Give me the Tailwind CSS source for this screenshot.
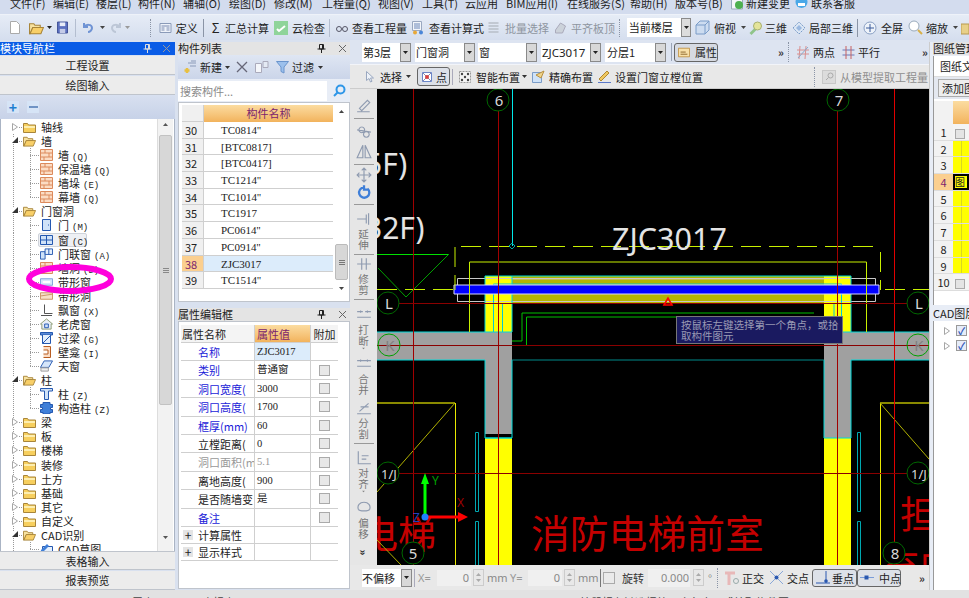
<!DOCTYPE html>
<html lang="en">

<head>
    <meta charset="UTF-8">
    <title>GCL</title>
    <script src="https://cdn.jsdelivr.net/npm/@tailwindcss/browser@4"></script>
</head>

<body class="m-0">
    <!-- shared icons -->
    <svg width="0" height="0" class="absolute">
        <symbol id="folder" viewBox="0 0 13 12"><path d="M.5 2.500h4l1 1.500h7v7.500h-12z" fill="#f7cf5e" stroke="#a8853a"/><path d="M1 5h11v2H1z" fill="#fdeeb0"/></symbol>
        <symbol id="folderopen" viewBox="0 0 14 12"><path d="M.5 2h4l1 1.500h5v2h-7l-2.500 6h-.500z" fill="#f7e2a0" stroke="#a8853a"/><path d="M3.500 5.500h10l-2.500 6H1z" fill="#f8cf68" stroke="#a8853a"/></symbol>
        <symbol id="brick" viewBox="0 0 13 12"><path d="M.5.500h12v11H.5z" fill="#fbdcc4" stroke="#dc8a5c"/><path d="M.5 4h12M.5 8h12M5 .500V4M9 4v4M4 8v3.500" stroke="#dc8a5c" fill="none"/></symbol>
        <symbol id="door" viewBox="0 0 13 12"><path d="M2.500.500h8v11h-8z" fill="#cfe2f8" stroke="#2458b0"/><path d="M8 6h1" stroke="#2458b0"/></symbol>
        <symbol id="window" viewBox="0 0 13 12"><path d="M.5 1.500h12v9H.5z" fill="#cfe2f8" stroke="#2458b0"/><path d="M6.500 1.500v9M.5 6h12" stroke="#2458b0"/></symbol>
        <symbol id="combo" viewBox="0 0 14 12"><path d="M.5 3.500h5v8h-5z" fill="#cfe2f8" stroke="#2458b0"/><path d="M5.500.500h8v6h-8z" fill="#e4effc" stroke="#2458b0"/><path d="M9.500.500v6" stroke="#2458b0"/></symbol>
        <symbol id="band" viewBox="0 0 14 12"><path d="M.5 2.500h13v7H.5z" fill="#d6e6fa" stroke="#7aa0d8"/><path d="M3 5h8v2H3z" fill="#fff"/></symbol>
        <symbol id="bandhole" viewBox="0 0 14 12"><path d="M.5 2.500h13v7H.5z" fill="#f7e0c8" stroke="#c89060"/><path d="M.5 6l13-2" stroke="#c89060"/></symbol>
        <symbol id="bay" viewBox="0 0 13 12"><path d="M4.500.500v9h8M1 11.500h11" stroke="#555" fill="none"/></symbol>
        <symbol id="dormer" viewBox="0 0 14 12"><path d="M7 .500l6.500 5.500H12v5.500H2V6H.5z" fill="#e8eef6" stroke="#8a9a72"/><path d="M5 6h4v4H5z" fill="#cfe2f8" stroke="#2458b0"/></symbol>
        <symbol id="lintel" viewBox="0 0 13 12"><path d="M.5.500h12v2.500H.5z" fill="#5a8ad6" stroke="#2458b0"/><path d="M2.500 3v8.500h8V3" fill="#e4effc" stroke="#2458b0"/><path d="M2.500 11.500l8-8" stroke="#2458b0"/></symbol>
        <symbol id="niche" viewBox="0 0 13 12"><path d="M3.500.500h7v11h-7" fill="#fbdcc4" stroke="#b85c20"/><path d="M3.500 4H8v4H3.500" fill="#fff" stroke="#b85c20"/></symbol>
        <symbol id="skylight" viewBox="0 0 14 12"><path d="M4.500.500h9l-4 7h-9z" fill="#d6e6fa" stroke="#2458b0"/><path d="M1 8h8v3.500H1z" fill="#eee" stroke="#999"/></symbol>
        <symbol id="column" viewBox="0 0 13 12"><path d="M.5.500h12v2.500h-4v8.500h-4V3h-4z" fill="#cfe2f8" stroke="#2458b0"/></symbol>
        <symbol id="gz" viewBox="0 0 13 12"><path d="M3 .500h7v2h2.500v3h-2v2h2v3H10v1.500H3v-1.500H.5v-3h2v-2h-2v-3H3z" fill="#3f7fd8" stroke="#2458b0"/></symbol>
        <symbol id="sketch" viewBox="0 0 13 12"><path d="M2.500 3.500h10v8h-10z" fill="#e4effc" stroke="#2458b0"/><path d="M1 7l6-6 2 2-6 6-2.500.500z" fill="#3f7fd8"/></symbol>
        <symbol id="arrow" viewBox="0 0 5 3"><path d="M0 0h5L2.500 3z" fill="currentColor"/></symbol>
        <symbol id="closed" viewBox="0 0 6 8"><path d="M.5.500l5 3.500-5 3.500z" fill="#fff" stroke="#a6a6a6"/></symbol>
        <symbol id="open" viewBox="0 0 6 6"><path d="M6 0v6H0z" fill="#333"/></symbol>
        <symbol id="pin" viewBox="0 0 9 9"><path d="M2.500.500h4v4.500h-4zM.5 5h8M4.500 5v4M5.500 1v4" fill="none" stroke="#222"/></symbol>
        <symbol id="x" viewBox="0 0 9 9"><path d="M1 1l7 7M8 1L1 8" stroke="#666" fill="none"/></symbol>
    </svg>

    <div class="w-[969px] h-[598px] overflow-hidden flex flex-col relative bg-[#d9e1ef] text-[#222] text-[11px] leading-[14px] font-['Noto_Sans_CJK_SC',sans-serif]">

        <!-- menu bar, cut off at the top -->
        <div class="h-[14px] shrink-0 flex items-start overflow-hidden bg-[#d3dcee] pl-[10px] whitespace-nowrap">
            <div class="-mt-[5px] flex leading-[16px]">
                <span class="w-[43px]">文件(F)</span>
                <span class="w-[43px]">编辑(E)</span>
                <span class="w-[42px]">楼层(L)</span>
                <span class="w-[45px]">构件(N)</span>
                <span class="w-[46px]">辅轴(O)</span>
                <span class="w-[45px]">绘图(D)</span>
                <span class="w-[48px]">修改(M)</span>
                <span class="w-[56px]">工程量(Q)</span>
                <span class="w-[44px]">视图(V)</span>
                <span class="w-[43px]">工具(T)</span>
                <span class="w-[41px]">云应用</span>
                <span class="w-[61px]">BIM应用(I)</span>
                <span class="w-[63px]">在线服务(S)</span>
                <span class="w-[45px]">帮助(H)</span>
                <span class="w-[55px]">版本号(B)</span>
                <svg class="w-[16px] h-[14px] mt-[1px]" viewBox="0 0 16 14"><path d="M1.500 0h11v13h-11z" fill="#f4f6fb" stroke="#9ab"/><circle cx="9" cy="9" r="4" fill="#4cb050"/></svg>
                <span class="w-[44px]">新建变更</span>
                <svg class="ml-[5px] w-[13px] h-[14px] mt-[1px]" viewBox="0 0 13 14"><circle cx="6.500" cy="6" r="6" fill="#4aa8e8"/><path d="M3 7h7v3H3z" fill="#fff"/></svg>
                <span class="ml-[3px]">联系客服</span>
            </div>
        </div>

        <!-- main toolbar -->
        <div class="h-[26px] shrink-0 flex items-center whitespace-nowrap bg-gradient-to-b from-[#e6ecf6] to-[#d5deee] border-t border-[#eef2f9]">
            <svg class="ml-[10px] shrink-0" width="10" height="13" viewBox="0 0 10 13"><path d="M.5.500h6l3 3v9h-9z" fill="#fff" stroke="#aaa"/></svg>
            <svg class="ml-[9px] shrink-0" width="15" height="14" viewBox="0 0 14 12"><use href="#folderopen"/></svg>
            <svg class="ml-[3px] shrink-0" width="5" height="3" viewBox="0 0 5 3"><use href="#arrow"/></svg>
            <svg class="ml-[5px] shrink-0" width="11" height="13" viewBox="0 0 12 13"><path d="M.5.500h11v12H.5z" fill="#5b70c0" stroke="#3a4a90"/><path d="M3 1h6v4H3z" fill="#e8ecf8"/><path d="M3 8h6v4.500H3z" fill="#c4cbe8"/></svg>
            <div class="ml-[7px] w-px h-[18px] bg-[#b4bed0]"></div>
            <svg class="ml-[6px] shrink-0" width="12" height="12" viewBox="0 0 12 12"><path d="M2 1v4h4M2 5c2-3 8-3 8 1 0 2-2 4-4 4" fill="none" stroke="#6f93d4" stroke-width="2"/></svg>
            <svg class="ml-[6px] shrink-0 text-[#444]" width="5" height="3" viewBox="0 0 5 3"><use href="#arrow"/></svg>
            <svg class="ml-[5px] shrink-0" width="12" height="12" viewBox="0 0 12 12"><path d="M10 1v4H6M10 5C8 2 2 2 2 6c0 2 2 4 4 4" fill="none" stroke="#bcc6d6" stroke-width="2"/></svg>
            <svg class="ml-[3px] shrink-0 text-[#999]" width="5" height="3" viewBox="0 0 5 3"><use href="#arrow"/></svg>
            <div class="ml-[20px] w-[3px] h-[18px] border-l border-dotted border-[#8a94a6]"></div>
            <svg class="ml-[6px] shrink-0" width="13" height="12" viewBox="0 0 12 12"><path d="M.5 1.500h11v9H.5z" fill="#eef2f9" stroke="#8a9ab8"/><path d="M2 4h8M2 6h3M7 6h3M2 8h3M7 8h3" stroke="#7a8ab0"/></svg>
            <span class="ml-[4px] w-[22px]">定义</span>
            <div class="ml-[5px] w-px h-[18px] bg-[#8a94a6]"></div>
            <span class="ml-[8px] text-[13px] w-[14px]">Σ</span>
            <span class="w-[44px]">汇总计算</span>
            <svg class="ml-[5px] shrink-0" width="14" height="14" viewBox="0 0 14 14"><path d="M0 0h14v14H0z" fill="#8fd49a"/><path d="M3 8l2 2 6-5" stroke="#fff" stroke-width="2" fill="none"/></svg>
            <span class="ml-[4px] w-[33px]">云检查</span>
            <div class="ml-[4px] w-px h-[18px] bg-[#b4bed0]"></div>
            <svg class="ml-[5px] shrink-0" width="14" height="8" viewBox="0 0 12 8"><circle cx="3" cy="5" r="2.500" fill="none" stroke="#556"/><circle cx="9" cy="5" r="2.500" fill="none" stroke="#556"/></svg>
            <span class="ml-[3px] w-[55px]">查看工程量</span>
            <svg class="ml-[5px] shrink-0" width="13" height="14" viewBox="0 0 13 14"><path d="M.5.500h9v9h-9z" fill="#f2f5fa" stroke="#9aa8c0"/><path d="M2 3h6M2 5h6M2 7h6" stroke="#6a86b8"/><circle cx="3" cy="11.500" r="2" fill="#e8a838"/><circle cx="9" cy="11.500" r="2" fill="#4a86d8"/></svg>
            <span class="ml-[4px] w-[55px]">查看计算式</span>
            <svg class="ml-[3px] shrink-0" width="14" height="12" viewBox="0 0 13 12"><path d="M1 1h10M1 4h10M1 7h10M1 10h10" stroke="#b8bec8" stroke-width="1.500"/></svg>
            <span class="ml-[4px] w-[44px] text-[#8e95a0]">批量选择</span>
            <svg class="ml-[5px] shrink-0" width="13" height="12" viewBox="0 0 12 12"><path d="M1 8l5-7 5 3-3 7H1z" fill="#ccd2da" stroke="#aab"/></svg>
            <span class="ml-[4px] w-[44px] text-[#8e95a0]">平齐板顶</span>
            <div class="ml-[4px] w-[3px] h-[18px] border-l border-dotted border-[#8a94a6]"></div>
            <div class="ml-[5px] w-[68px] h-[19px] flex bg-white">
                <span class="flex-1 pl-[2px] leading-[19px]">当前楼层</span>
                <span class="w-[10px] border border-[#8a8a8a] bg-[#dcdcdc] flex items-center justify-center"><svg width="5" height="3" viewBox="0 0 5 3"><use href="#arrow"/></svg></span>
            </div>
            <svg class="ml-[4px] shrink-0" width="15" height="15" viewBox="0 0 15 15"><path d="M1 5l4-4h9v9l-4 4H1z" fill="#cddcf0" stroke="#7a9cc8"/><path d="M1 5h9v9M10 5l4-4" fill="none" stroke="#7a9cc8"/></svg>
            <span class="ml-[4px] w-[22px]">俯视</span>
            <svg class="ml-[5px] shrink-0 text-[#444]" width="5" height="3" viewBox="0 0 5 3"><use href="#arrow"/></svg>
            <svg class="ml-[2px] shrink-0" width="15" height="14" viewBox="0 0 14 14"><path d="M1 12l5-5 2 2-5 5z" fill="#8fc48a"/><circle cx="9" cy="5" r="4" fill="#e4e49a" stroke="#a8b070"/></svg>
            <span class="ml-[2px] w-[22px]">三维</span>
            <svg class="ml-[5px] shrink-0" width="14" height="14" viewBox="0 0 14 14"><path d="M1 7l6-6 6 6-6 6z" fill="#dbe6f4" stroke="#7a9cc8" stroke-dasharray="2 1"/><path d="M4 7l3-3 3 3-3 3z" fill="#9ab8e0"/></svg>
            <span class="ml-[3px] w-[44px]">局部三维</span>
            <div class="ml-[4px] w-px h-[18px] bg-[#8a94a6]"></div>
            <svg class="ml-[5px] shrink-0" width="14" height="14" viewBox="0 0 14 14"><circle cx="7" cy="7" r="6" fill="#eef3fa" stroke="#8aa0c4"/><path d="M7 3v8M3 7h8" stroke="#3a5a9a"/></svg>
            <span class="ml-[4px] w-[22px]">全屏</span>
            <svg class="ml-[5px] shrink-0" width="15" height="15" viewBox="0 0 15 15"><circle cx="6" cy="6" r="5" fill="#fff" stroke="#9ab"/><path d="M10 10l4 4" stroke="#d8b048" stroke-width="2"/></svg>
            <span class="ml-[3px] w-[22px]">缩放</span>
            <svg class="ml-[5px] shrink-0 text-[#444]" width="5" height="3" viewBox="0 0 5 3"><use href="#arrow"/></svg>
            <svg class="ml-[3px] shrink-0" width="8" height="14" viewBox="0 0 8 14"><path d="M0 3h8v10H0z" fill="#e8d088" stroke="#b89a50"/></svg>
        </div>

        <div class="h-[550px] shrink-0 flex">

            <!-- module navigation -->
            <div class="w-[175px] shrink-0 flex flex-col mt-[2px]">
                <div class="h-[13px] shrink-0 flex items-center bg-[#0a5ce6] text-white leading-[13px]">
                    <span class="flex-1">模块导航栏</span>
                    <svg class="mr-[10px] invert" width="9" height="9"><use href="#pin"/></svg>
                    <svg class="mr-[4px] invert" width="9" height="9"><use href="#x"/></svg>
                </div>
                <div class="h-[19px] mt-[1px] shrink-0 bg-[#ececec] border-b border-[#bfc4cc] text-center leading-[19px]">工程设置</div>
                <div class="h-[19px] mt-px shrink-0 bg-[#ececec] border-b border-[#bfc4cc] text-center leading-[19px]">绘图输入</div>
                <div class="h-[24px] shrink-0 flex items-center pl-[7px] gap-[8px] bg-gradient-to-b from-[#d8e0f0] to-[#c7d2e8]">
                    <span class="w-[12px] h-[12px] bg-[#d6e4f6] text-[#1f7fd0] font-bold text-[14px] leading-[12px] text-center">+</span>
                    <span class="w-[12px] h-[12px] bg-[#d6e4f6] flex items-center justify-center"><span class="w-[9px] h-[2px] bg-[#6f93c4]"></span></span>
                </div>
                <div class="h-[432px] shrink-0 flex bg-white border-x border-[#aab4c4] overflow-hidden">
                    <div id="tree" class="w-[156px] shrink-0 overflow-hidden pt-[1px]"></div>
                    <div class="w-[16px] shrink-0 flex flex-col items-center bg-[#f2f2f2] border-l border-[#ddd]">
                        <svg class="mt-[4px] rotate-180 text-[#555]" width="5" height="3" viewBox="0 0 5 3"><use href="#arrow"/></svg>
                        <div class="mt-[9px] w-[13px] h-[270px] rounded-[2px] bg-[#d7d7d7] border border-[#c2c2c2] flex flex-col items-center justify-center gap-px">
                            <span class="w-[6px] h-px bg-[#888]"></span><span class="w-[6px] h-px bg-[#888]"></span><span class="w-[6px] h-px bg-[#888]"></span>
                        </div>
                        <svg class="mt-[131px] text-[#555]" width="5" height="3" viewBox="0 0 5 3"><use href="#arrow"/></svg>
                    </div>
                </div>
                <div class="h-[19px] shrink-0 bg-[#ececec] border-y border-[#bfc4cc] text-center leading-[19px]">表格输入</div>
                <div class="h-[19px] mt-px shrink-0 bg-[#ececec] border-b border-[#bfc4cc] text-center leading-[19px]">报表预览</div>
            </div>

            <!-- component list + property editor -->
            <div class="w-[172px] shrink-0 ml-[3px] flex flex-col mt-[2px]">
                <div class="h-[13px] shrink-0 flex items-center bg-[#e4e4e4] leading-[13px]">
                    <span class="flex-1">构件列表</span>
                    <svg class="mr-[12px]" width="9" height="9"><use href="#pin"/></svg>
                    <svg class="mr-[3px]" width="9" height="9"><use href="#x"/></svg>
                </div>
                <div class="h-[24px] shrink-0 flex items-center bg-gradient-to-b from-[#dfe6f3] to-[#cbd5e9] pl-[5px] whitespace-nowrap">
                    <svg class="shrink-0" width="14" height="14" viewBox="0 0 14 14"><path d="M5 3h8M8 1h5M7 6h6" stroke="#8a9ab8"/><path d="M4 8v5M1.500 10.500h5" stroke="#e8c040" stroke-width="2.500"/></svg>
                    <span class="ml-[3px] w-[22px]">新建</span>
                    <svg class="ml-[3px] shrink-0 text-[#333]" width="5" height="3" viewBox="0 0 5 3"><use href="#arrow"/></svg>
                    <svg class="ml-[6px] shrink-0" width="12" height="12" viewBox="0 0 12 12"><path d="M1 1l10 10M11 1L1 11" stroke="#667" stroke-width="1.300"/></svg>
                    <svg class="ml-[7px] shrink-0" width="14" height="12" viewBox="0 0 14 12"><path d="M.5 2.500h6v9h-6z" fill="#f4f6fa" stroke="#aab"/><path d="M8 .500h5v6H8z" fill="#e4eaf4" stroke="#aab"/></svg>
                    <svg class="ml-[7px] shrink-0" width="13" height="13" viewBox="0 0 13 13"><path d="M.5.500h12L8 6v6l-3-1.500V6z" fill="#9cc0ec" stroke="#6a94cc"/></svg>
                    <span class="ml-[3px] w-[22px]">过滤</span>
                    <svg class="ml-[4px] shrink-0 text-[#333]" width="5" height="3" viewBox="0 0 5 3"><use href="#arrow"/></svg>
                </div>
                <div class="h-[23px] shrink-0 flex items-center bg-[#e8edf6]">
                    <span class="w-[149px] h-[20px] bg-white pl-[2px] leading-[20px] text-[#8a8a8a]">搜索构件...</span>
                    <svg class="ml-[6px]" width="13" height="13" viewBox="0 0 13 13"><circle cx="7.500" cy="5.500" r="4" fill="none" stroke="#2e96e8" stroke-width="2"/><path d="M4.500 8.500L1 12" stroke="#2e96e8" stroke-width="2"/></svg>
                </div>
                <div class="h-[200px] shrink-0 bg-white pt-[2px] pl-[3px] flex border border-[#bfc4cc]">
                    <div class="w-[151px] shrink-0">
                        <div class="h-[17px] flex">
                            <div class="w-[22px] bg-[#f0f0f0] border-b border-r border-[#cfcfcf]"></div>
                            <div class="flex-1 text-center leading-[17px] text-[#7a1f6e] bg-gradient-to-b from-[#fbdca0] to-[#f2b35c]">构件名称</div>
                        </div>
                        <div id="comps"></div>
                    </div>
                    <div class="ml-[1px] w-[15px] flex flex-col items-center">
                        <svg class="mt-[5px] rotate-180 text-[#444]" width="5" height="3" viewBox="0 0 5 3"><use href="#arrow"/></svg>
                        <div class="mt-[131px] w-[13px] h-[36px] rounded-[2px] bg-[#d7d7d7] border border-[#bbb] flex flex-col items-center justify-center gap-px">
                            <span class="w-[6px] h-px bg-[#777]"></span><span class="w-[6px] h-px bg-[#777]"></span><span class="w-[6px] h-px bg-[#777]"></span>
                        </div>
                        <svg class="mt-[7px] text-[#444]" width="5" height="3" viewBox="0 0 5 3"><use href="#arrow"/></svg>
                    </div>
                </div>
                <div class="h-[13px] mt-[6px] shrink-0 flex items-center bg-[#e4e4e4] leading-[13px]">
                    <span class="flex-1">属性编辑框</span>
                    <svg class="mr-[12px]" width="9" height="9"><use href="#pin"/></svg>
                    <svg class="mr-[3px]" width="9" height="9"><use href="#x"/></svg>
                </div>
                <div class="flex-1 bg-white border border-[#bfc4cc] pt-[3px] pl-[2px] mb-[1px]">
                    <div class="w-[157px]">
                        <div class="h-[18px] flex border-b border-[#cfcfcf]">
                            <div class="w-[74px] pl-[1px] leading-[18px] bg-[#f4f4f4] border-r border-[#cfcfcf]">属性名称</div>
                            <div class="w-[56px] pl-[2px] leading-[18px] text-[#7a1f6e] bg-gradient-to-b from-[#fbdca0] to-[#f2b35c] border-r border-[#cfcfcf]">属性值</div>
                            <div class="w-[27px] leading-[18px] bg-[#f4f4f4] text-center">附加</div>
                        </div>
                        <div id="props"></div>
                    </div>
                </div>
            </div>

            <!-- drawing area with its toolbars -->
            <div class="w-[579px] shrink-0 flex flex-col">
                <div class="h-[25px] shrink-0 flex items-center whitespace-nowrap bg-[#dde4f1] border-b border-[#f2f4f9]">
                    <div class="ml-[12px] w-[49px] h-[19px] flex bg-white">
                        <span class="flex-1 pl-[1px] leading-[19px]">第3层</span>
                        <span class="w-[11px] border border-[#8a8a8a] bg-[#d8d8d8] flex items-center justify-center"><svg width="5" height="3" viewBox="0 0 5 3"><use href="#arrow"/></svg></span>
                    </div>
                    <div class="ml-[4px] w-[60px] h-[19px] flex bg-white">
                        <span class="flex-1 pl-[1px] leading-[19px]">门窗洞</span>
                        <span class="w-[11px] border border-[#8a8a8a] bg-[#d8d8d8] flex items-center justify-center"><svg width="5" height="3" viewBox="0 0 5 3"><use href="#arrow"/></svg></span>
                    </div>
                    <div class="ml-[3px] w-[59px] h-[19px] flex bg-white">
                        <span class="flex-1 pl-[1px] leading-[19px]">窗</span>
                        <span class="w-[11px] border border-[#8a8a8a] bg-[#d8d8d8] flex items-center justify-center"><svg width="5" height="3" viewBox="0 0 5 3"><use href="#arrow"/></svg></span>
                    </div>
                    <div class="ml-[4px] w-[60px] h-[19px] flex bg-white">
                        <span class="flex-1 pl-[1px] leading-[19px] text-[11.500px] font-['Noto_Sans',sans-serif]">ZJC3017</span>
                        <span class="w-[11px] border border-[#8a8a8a] bg-[#d8d8d8] flex items-center justify-center"><svg width="5" height="3" viewBox="0 0 5 3"><use href="#arrow"/></svg></span>
                    </div>
                    <div class="ml-[4px] w-[61px] h-[19px] flex bg-white">
                        <span class="flex-1 pl-[2px] leading-[19px]">分层1</span>
                        <span class="w-[11px] border border-[#8a8a8a] bg-[#d8d8d8] flex items-center justify-center"><svg width="5" height="3" viewBox="0 0 5 3"><use href="#arrow"/></svg></span>
                    </div>
                    <div class="ml-[5px] w-px h-[18px] bg-[#9aa4b6]"></div>
                    <div class="ml-[2px] w-[44px] h-[19px] flex items-center rounded-[3px] border border-[#666] bg-[#d6dae2] pl-[3px]">
                        <svg width="14" height="11" viewBox="0 0 14 11"><path d="M.5.500h13v10H.5z" fill="#f8e0a8" stroke="#c09040"/><path d="M3 5h6M3 7.500h8" stroke="#805820"/></svg>
                        <span class="ml-[5px] w-[22px]">属性</span>
                    </div>
                    <span class="ml-[60px] w-[5px] text-[11px] font-bold text-[#333]">»</span>
                    <div class="ml-[5px] w-[3px] h-[20px] border-l border-dotted border-[#8a94a6]"></div>
                    <svg class="ml-[6px] shrink-0" width="12" height="13" viewBox="0 0 12 13"><path d="M0 8h12M0 4h12M3 0l-1 13M9 0L8 13" stroke="#d89090"/><path d="M1 12L11 1" stroke="#8aa8c8"/></svg>
                    <span class="ml-[4px] w-[22px]">两点</span>
                    <svg class="ml-[7px] shrink-0" width="13" height="13" viewBox="0 0 12 13"><path d="M0 4h12M0 9h12" stroke="#6a78b8"/><path d="M3.500 0v13M8.500 0v13" stroke="#c86060"/></svg>
                    <span class="ml-[3px] w-[22px]">平行</span>
                    <span class="ml-[42px] text-[11px] font-bold text-[#333]">»</span>
                </div>
                <div class="h-[24px] shrink-0 flex items-center whitespace-nowrap bg-[#e8e8e8] border-b border-[#ccc]">
                    <svg class="ml-[16px] shrink-0" width="8" height="12" viewBox="0 0 8 12"><path d="M.5.500v9l2.500-2 1.500 3.500 1.500-.7L4.500 7H7.500z" fill="#eef2f8" stroke="#9aa8c0"/></svg>
                    <span class="ml-[6px] w-[22px]">选择</span>
                    <svg class="ml-[4px] shrink-0 text-[#333]" width="5" height="3" viewBox="0 0 5 3"><use href="#arrow"/></svg>
                    <div class="ml-[6px] w-[33px] h-[19px] flex items-center rounded-[3px] border border-[#666] bg-[#dde1e8] pl-[4px]">
                        <svg class="shrink-0" width="10" height="10" viewBox="0 0 10 10"><path d="M.5.500h9v9h-9z" fill="#fff" stroke="#6a86c8"/><path d="M1 1l8 8M9 1L1 9" stroke="#88a"/><circle cx="5" cy="5" r="2" fill="#d84040"/></svg>
                        <span class="ml-[4px] w-[11px]">点</span>
                    </div>
                    <div class="ml-[2px] w-px h-[16px] bg-[#aab]"></div>
                    <svg class="ml-[6px] shrink-0" width="12" height="12" viewBox="0 0 12 12"><path d="M.5.500h11v11H.5z" fill="#f4f4f4" stroke="#999" stroke-dasharray="2 1"/><circle cx="3" cy="3" r="1.200" fill="#444"/><circle cx="9" cy="3" r="1.200" fill="#444"/><circle cx="3" cy="9" r="1.200" fill="#444"/><circle cx="9" cy="9" r="1.200" fill="#444"/><circle cx="6" cy="6" r="1.200" fill="#444"/></svg>
                    <span class="ml-[5px] w-[44px]">智能布置</span>
                    <svg class="ml-[2px] shrink-0 text-[#333]" width="5" height="3" viewBox="0 0 5 3"><use href="#arrow"/></svg>
                    <svg class="ml-[5px] shrink-0" width="13" height="13" viewBox="0 0 13 13"><path d="M.5 2.500h9v10h-9z" fill="#cfe2f8" stroke="#7a9cc8"/><path d="M4 5l8-4-3 7z" fill="#f0d48a" stroke="#b89040"/></svg>
                    <span class="ml-[4px] w-[44px]">精确布置</span>
                    <svg class="ml-[5px] shrink-0" width="13" height="13" viewBox="0 0 13 13"><path d="M1 9l8-8 2 2-8 8z" fill="#f0c860" stroke="#b08830"/><path d="M0 12.500h13" stroke="#5a78c8"/></svg>
                    <span class="ml-[4px] w-[88px]">设置门窗立樘位置</span>
                    <div class="ml-[111px] w-[3px] h-[20px] border-l border-dotted border-[#8a94a6]"></div>
                    <div class="ml-[5px] w-[14px] h-[14px] bg-[#dcdcdc] border border-[#c8c8c8] flex items-center justify-center">
                        <svg width="9" height="9" viewBox="0 0 9 9"><circle cx="5.500" cy="3.500" r="2.500" fill="none" stroke="#aaa"/><path d="M3.500 5.500L1 8" stroke="#aaa"/></svg>
                    </div>
                    <span class="ml-[4px] text-[#8e8e8e]">从模型提取工程量</span>
                </div>
                <div class="h-[476px] shrink-0 flex">
                    <div id="vtools" class="w-[27px] shrink-0 flex flex-col items-center text-[#777] text-[10.500px] leading-[11px] bg-[#e6e6e6] pt-[9px] overflow-hidden"></div>
                    <div class="w-[552px] h-[476px] relative overflow-hidden bg-black">
                        <svg width="552" height="476" viewBox="377 89 552 476" class="block">
                            <text x="360" y="548" font-size="38" fill="#c40000" font-family="Noto Sans CJK SC">电梯</text>
                            <text x="531" y="548" font-size="38.800" fill="#c40000" font-family="Noto Sans CJK SC">消防电梯前室</text>
                            <text x="900" y="528" font-size="38" fill="#c40000" font-family="Noto Sans CJK SC">担</text>
                            <text x="882" y="583" font-size="38" fill="#c40000" font-family="Noto Sans CJK SC">至四</text>

                            <!-- walls -->
                            <path d="M377 332h135v102h-27V360H377zM929 332H824v106h27v-78h78z" fill="#a0a0a0"/>
                            <path d="M485 438h27v127h-27zM824 438h27v127h-27zM485 276h27v56h-27zM824 276h27v56h-27z" fill="#ffff00"/>
                            <path d="M512 276h312v27H512z" fill="#b4b400"/>
                            <path d="M512 279h312" stroke="#c8c8a0" fill="none"/>
                            <path d="M457.500 278.500h418v23h-418z" fill="none" stroke="#c8c8c8"/>
                            <path d="M485 332v-56h366v56M512 276v56M377 332h135M824 332h105M377 360h108v78h27V360M851 360h78M485 438h27M824 438h27M824 360v78M851 438v-78" fill="none" stroke="#00d8d8"/>
                            <path d="M493.500 332v-48h348V332M502.500 332v-28M834 332v-28" fill="none" stroke="#00c8d8"/>
                            <path d="M512 360h312" stroke="#008a8a"/>
                            <path d="M454 285h425v9H454z" fill="#0000ff" stroke="#d8d8ff"/>

                            <!-- yellow lines -->
                            <path d="M461 246.500h415M885 289.500h44M377 289.500h78M455 247v43M880.500 252v38" stroke="#c8f000" stroke-dasharray="20 8" fill="none"/>
                            <path d="M469.500 332v-70h397v70" stroke="#c8f000" fill="none"/>
                            <path d="M377 403h78M880 403h49" stroke="#8a8a00" stroke-width="2"/>
                            <path d="M455.500 403v162M880.500 403v162" stroke="#e8e800"/>
                            <path d="M455 403L377 492M880 403l49 56M377 540l24 25" stroke="#b0b000"/>

                            <!-- green lines -->
                            <path d="M512 341h10v-28h292M526.500 345v-28h290" stroke="#00c000" fill="none"/>
                            <path d="M377 254.500h72" stroke="#00e000"/>
                            <path d="M449 254L406 297 378 268" stroke="#00a000" fill="none"/>

                            <!-- teal strips -->
                            <path d="M475.500 432.500h3v79h-3zM475.500 521.500h3v44h-3zM857.500 432.500h3v79h-3zM857.500 521.500h3v44h-3z" fill="none" stroke="#00a8b0"/>
                            <path d="M512.500 89v157" stroke="#00e8e8"/>
                            <path d="M512 243l3 3-3 3-3-3z" fill="none" stroke="#00a8a8"/>

                            <!-- axes -->
                            <path d="M413.500 89v476M498.500 89v476M837.500 89v476" stroke="#a00000"/>
                            <path d="M894.500 89v476" stroke="#e00000"/>
                            <path d="M377 303.500h552M377 345.500h552M377 473.500h552" stroke="#8a0000"/>

                            <!-- axis bubbles -->
                            <g fill="black" stroke="#006800">
                                <circle cx="498" cy="100" r="11"/><circle cx="838" cy="100" r="11"/>
                                <circle cx="388" cy="303" r="11"/><circle cx="918" cy="303" r="11"/>
                                <circle cx="388" cy="473" r="11"/><circle cx="918" cy="473" r="11"/>
                                <circle cx="413" cy="553" r="11"/><circle cx="894" cy="553" r="11"/>
                            </g>
                            <g fill="none" stroke="#00a000"><circle cx="389" cy="345" r="11"/><circle cx="918" cy="345" r="11"/></g>
                            <g fill="#d8d8d8" font-family="Noto Sans" font-size="15" text-anchor="middle">
                                <text x="499" y="106">6</text><text x="839" y="106">7</text>
                                <text x="389" y="309">L</text><text x="919" y="309">L</text>
                                <text x="413" y="559">5</text><text x="895" y="559">8</text>
                                <text x="389" y="479" font-size="13">1/J</text><text x="919" y="479" font-size="13">1/J</text>
                            </g>
                            <g fill="#808080" font-family="Noto Sans" font-size="15" text-anchor="middle"><text x="390" y="351">K</text><text x="919" y="351">K</text></g>

                            <!-- drawing labels -->
                            <g fill="#e4e4e4" font-family="Noto Sans" font-size="30">
                                <text x="365" y="175">5F)</text>
                                <text x="365" y="239">32F)</text>
                                <text x="612" y="250" font-size="30.500">ZJC3017</text>
                            </g>
                            <path d="M664 305l4-7 4 7z" fill="none" stroke="#ff0000" stroke-width="1.600"/>

                            <!-- ucs -->
                            <path d="M425 517v-36" stroke="#00ff00" stroke-width="3"/>
                            <path d="M425 473l4 11h-8z" fill="#00ff00"/>
                            <path d="M425 517h36" stroke="#ff0000" stroke-width="3"/>
                            <path d="M468 517l-10-5v10z" fill="#ff0000"/>
                            <circle cx="425" cy="517" r="3.500" fill="#2080ff"/>
                            <text x="432" y="485" font-size="12" fill="#00a000" font-family="Noto Sans">Y</text>
                            <text x="457" y="507" font-size="12" fill="#a00000" font-family="Noto Sans">X</text>
                            <text x="413" y="522" font-size="12" fill="#2040c0" font-family="Noto Sans">Z</text>
                        </svg>
                        <!-- tooltip over the drawing -->
                        <div class="absolute left-[299px] top-[227px] w-[167px] h-[28px] bg-[#1a1a60] border border-[#777] pl-[4px] text-[10.500px] leading-[11px] pt-[2px] text-[#9a9ab4]">按鼠标左键选择第一个角点，或拾取构件图元</div>
                    </div>
                </div>
                <!-- snap bar -->
                <div class="h-[25px] shrink-0 flex items-center whitespace-nowrap bg-[#e8e8e8] text-[#777]">
                    <div class="ml-[12px] w-[50px] h-[18px] flex bg-white text-[#222]">
                        <span class="flex-1 leading-[18px]">不偏移</span>
                        <span class="w-[11px] border border-[#8a8a8a] bg-[#d8d8d8] flex items-center justify-center"><svg width="5" height="3" viewBox="0 0 5 3"><use href="#arrow"/></svg></span>
                    </div>
                    <div class="ml-[2px] w-px h-[18px] bg-[#aab]"></div>
                    <span class="ml-[3px] w-[18px] font-['Noto_Sans',sans-serif] text-[#999]">X=</span>
                    <span class="w-[36px] h-[18px] bg-[#f0f0f0] border border-[#e8e8e8] text-right pr-[2px] leading-[16px] font-['Noto_Sans',sans-serif] text-[#888]">0</span>
                    <span class="ml-[1px] w-[11px] h-[17px] border border-[#ccc] flex flex-col items-center justify-center gap-[3px] text-[#aaa]"><svg class="rotate-180" width="5" height="3" viewBox="0 0 5 3"><use href="#arrow"/></svg><svg width="5" height="3" viewBox="0 0 5 3"><use href="#arrow"/></svg></span>
                    <span class="ml-[3px] w-[23px] font-['Noto_Sans',sans-serif] text-[#888]">mm</span>
                    <span class="w-[17px] font-['Noto_Sans',sans-serif] text-[#999]">Y=</span>
                    <span class="w-[36px] h-[18px] bg-[#f0f0f0] border border-[#e8e8e8] text-right pr-[2px] leading-[16px] font-['Noto_Sans',sans-serif] text-[#888]">0</span>
                    <span class="ml-[1px] w-[11px] h-[17px] border border-[#ccc] flex flex-col items-center justify-center gap-[3px] text-[#aaa]"><svg class="rotate-180" width="5" height="3" viewBox="0 0 5 3"><use href="#arrow"/></svg><svg width="5" height="3" viewBox="0 0 5 3"><use href="#arrow"/></svg></span>
                    <span class="ml-[3px] w-[22px] font-['Noto_Sans',sans-serif] text-[#888]">mm</span>
                    <div class="w-px h-[18px] bg-[#777]"></div>
                    <span class="ml-[2px] w-[12px] h-[12px] bg-[#eaeaea] border border-[#aaa]"></span>
                    <span class="ml-[7px] w-[22px] text-[#333]">旋转</span>
                    <span class="ml-[4px] w-[42px] h-[18px] bg-[#f0f0f0] text-right pr-[1px] leading-[18px] font-['Noto_Sans',sans-serif] text-[#888]">0.000</span>
                    <span class="ml-[3px] w-[11px] h-[17px] border border-[#ccc] flex flex-col items-center justify-center gap-[3px] text-[#aaa]"><svg class="rotate-180" width="5" height="3" viewBox="0 0 5 3"><use href="#arrow"/></svg><svg width="5" height="3" viewBox="0 0 5 3"><use href="#arrow"/></svg></span>
                    <span class="ml-[4px] w-[6px] text-[#888]">°</span>
                    <div class="ml-[3px] w-[3px] h-[20px] border-l border-dotted border-[#8a94a6]"></div>
                    <svg class="ml-[5px] shrink-0" width="15" height="14" viewBox="0 0 15 14"><path d="M0 2h10M4 2v12" stroke="#e8b8b8" stroke-width="3"/><circle cx="11" cy="10" r="2.500" fill="none" stroke="#9aa"/></svg>
                    <span class="ml-[2px] w-[22px] text-[#222]">正交</span>
                    <svg class="ml-[6px] shrink-0" width="13" height="13" viewBox="0 0 13 13"><path d="M0 0l13 13M13 0L0 13" stroke="#8aa8d8"/><circle cx="6.500" cy="6.500" r="2" fill="#2a58b0"/></svg>
                    <span class="ml-[4px] w-[22px] text-[#222]">交点</span>
                    <div class="ml-[3px] w-[45px] h-[18px] flex items-center rounded-[3px] border border-[#666] bg-[#dde1e8] text-[#222]">
                        <svg class="ml-[3px] shrink-0" width="14" height="13" viewBox="0 0 14 13"><path d="M0 12h14" stroke="#2a58b0"/><path d="M10 0v12" stroke="#2a58b0"/><circle cx="10" cy="10" r="1.800" fill="#2a58b0"/></svg>
                        <span class="ml-[2px]">垂点</span>
                    </div>
                    <div class="w-[44px] h-[18px] flex items-center rounded-[3px] border border-[#666] bg-[#dde1e8] text-[#222]">
                        <svg class="ml-[2px] shrink-0" width="14" height="7" viewBox="0 0 14 7"><path d="M0 3.500h14" stroke="#7a9cd8"/><path d="M4.500 1.500h4v4h-4z" fill="#2a58b0"/></svg>
                        <span class="ml-[5px]">中点</span>
                    </div>
                    <span class="ml-[18px] text-[11px] font-bold text-[#333]">»</span>
                </div>
            </div>

            <!-- drawing file manager -->
            <div class="w-[40px] shrink-0 flex flex-col overflow-hidden whitespace-nowrap bg-[#e8edf6] border-l border-[#ccc] pl-[3px] mt-[2px]">
                <div class="h-[13px] shrink-0 leading-[13px] bg-[#e4e4e4] overflow-hidden">图纸管理</div>
                <div class="h-[249px] shrink-0 mt-[1px] border-l border-[#999] bg-white overflow-hidden">
                    <div class="h-[21px] pl-[6px] leading-[20px] border-b border-[#ddd]">图纸文件</div>
                    <div class="h-[22px] bg-[#e4e8f0] pl-[4px] pt-[2px]"><span class="inline-block w-[40px] h-[18px] leading-[16px] pl-[3px] bg-[#eee] border border-[#aaa]">添加图纸</span></div>
                    <div class="h-[23px] flex mt-[2px]">
                        <div class="w-[19px] bg-[#f2f2f2]"></div>
                        <div class="flex-1 bg-gradient-to-b from-[#fbdca0] to-[#f2b35c]"></div>
                    </div>
                    <div id="sheets"></div>
                </div>
                <div class="h-[15px] shrink-0 mt-[1px] leading-[15px] overflow-hidden">CAD图层</div>
                <div class="flex-1 border-l border-[#999] bg-white flex flex-col gap-[4px] pt-[4px] pl-[10px]">
                    <div class="flex items-center h-[11px]"><svg width="6" height="8" viewBox="0 0 6 8"><use href="#closed"/></svg><span class="ml-[6px] w-[11px] h-[11px] bg-[#e6ecf8] border border-[#999] text-[#2d55b8] text-[10px] leading-[9px] font-bold text-center">✓</span></div>
                    <div class="flex items-center h-[11px]"><svg width="6" height="8" viewBox="0 0 6 8"><use href="#closed"/></svg><span class="ml-[6px] w-[11px] h-[11px] bg-[#e6ecf8] border border-[#999] text-[#2d55b8] text-[10px] leading-[9px] font-bold text-center">✓</span></div>
                </div>
            </div>
        </div>

        <!-- status bar, cut off at the bottom -->
        <div class="h-[8px] shrink-0 overflow-hidden bg-[#e2e2e2] whitespace-nowrap flex text-[#444] pt-[5px] leading-[14px]">
            <span class="ml-[6px] w-[126px]">X=12537 Y=1000</span>
            <span class="w-[70px]">层高: 3.0</span>
            <span class="w-[378px]">底标高: 8.5</span>
            <span>按鼠标左键选择第一个角点，或拾取构件图元</span>
        </div>

        <!-- magenta marker drawn on the screenshot -->
        <svg class="absolute left-[25px] top-[261px]" width="92" height="36" viewBox="0 0 92 36">
            <ellipse cx="45" cy="18" rx="41" ry="12" fill="none" stroke="#ff00dc" stroke-width="6"/>
        </svg>
    </div>

    <script>
        // tree: [depth, icon, label, hotkey]
        const treeItems = [
            [0, 'folder', '轴线'], [0, 'folderopen', '墙'],
            [1, 'brick', '墙', '(Q)'], [1, 'brick', '保温墙', '(Q)'], [1, 'brick', '墙垛', '(E)'], [1, 'brick', '幕墙', '(Q)'],
            [0, 'folderopen', '门窗洞'],
            [1, 'door', '门', '(M)'], [1, 'window', '窗', '(C)'], [1, 'combo', '门联窗', '(A)'], [1, 'brick', '墙洞', '(D)'],
            [1, 'band', '带形窗'], [1, 'bandhole', '带形洞'], [1, 'bay', '飘窗', '(X)'], [1, 'dormer', '老虎窗'],
            [1, 'lintel', '过梁', '(G)'], [1, 'niche', '壁龛', '(I)'], [1, 'skylight', '天窗'],
            [0, 'folderopen', '柱'], [1, 'column', '柱', '(Z)'], [1, 'gz', '构造柱', '(Z)'],
            [0, 'folder', '梁'], [0, 'folder', '板'], [0, 'folder', '楼梯'], [0, 'folder', '装修'], [0, 'folder', '土方'],
            [0, 'folder', '基础'], [0, 'folder', '其它'], [0, 'folder', '自定义'],
            [0, 'folderopen', 'CAD识别'], [1, 'sketch', 'CAD草图']
        ];
        const dots = 'absolute border-dotted border-[#999]';
        document.getElementById('tree').innerHTML = treeItems.map(([depth, icon, label, key], i) => {
            const opened = icon === 'folderopen';
            const next = treeItems[i + 1];
            const marker = depth ? '' : `<svg class="absolute left-[11px] top-[3px] bg-white" width="6" height="${opened ? 6 : 8}"><use href="#${opened ? 'open' : 'closed'}"/></svg>`;
            const selected = label === '窗' ? '<span class="absolute left-[37px] top-0 w-[49px] h-[14px] rounded-[2px] bg-[#eef0f4] border border-[#cfd3da]"></span>' : '';
            // connector lines of the tree
            const rootLine = `<span class="${dots} left-[12px] top-0 h-[15px] border-l"></span>`;
            const lines = depth
                ? `${rootLine}<span class="${dots} left-[29px] top-0 ${next && next[0] === 1 ? 'h-[15px]' : 'h-[7px]'} border-l"></span><span class="${dots} left-[29px] top-[7px] w-[9px] border-t"></span>`
                : `${i ? rootLine : ''}<span class="${dots} left-[16px] top-[7px] w-[5px] border-t"></span>`;
            return `<div class="relative h-[14.07px] whitespace-nowrap leading-[14px]">
                ${lines}${selected}${marker}
                <svg class="absolute ${depth ? 'left-[39px]' : 'left-[22px]'} top-px" width="13" height="12"><use href="#${icon}"/></svg>
                <span class="absolute ${depth ? 'left-[57px]' : 'left-[40px]'} top-0">${label}<span class="ml-[3px] text-[9px] font-['Liberation_Mono',monospace]">${key || ''}</span></span>
            </div>`;
        }).join('');

        const comps = [['30', "TC0814''"], ['31', '[BTC0817]'], ['32', '[BTC0417]'], ['33', "TC1214''"], ['34', "TC1014''"],
            ['35', 'TC1917'], ['36', "PC0614''"], ['37', "PC0914''"], ['38', 'ZJC3017'], ['39', "TC1514''"]];
        document.getElementById('comps').innerHTML = comps.map(([n, name]) => {
            const on = n === '38';
            return `<div class="h-[16.7px] flex border-b border-[#cfcfcf] leading-[16px] ${on ? 'bg-[#dcecfb]' : ''}">
                <div class="w-[22px] pl-[3px] border-r border-[#cfcfcf] ${on ? 'bg-[#fbcf8f] text-[#7a1f6e]' : 'bg-[#f0f0f0]'}">${n}</div>
                <div class="pl-[17px] text-[11px] font-['Liberation_Serif',serif]">${name}</div>
            </div>`;
        }).join('');

        const blue = 'text-[#1a1ad8]', grey = 'text-[#999]';
        const props = [['名称', 'ZJC3017', blue, false], ['类别', '普通窗', blue, true], ['洞口宽度(', '3000', blue, true], ['洞口高度(', '1700', blue, true],
            ['框厚(mm)', '60', blue, true], ['立樘距离(', '0', '', true], ['洞口面积(m', '5.1', grey, true], ['离地高度(', '900', '', true],
            ['是否随墙变', '是', '', true], ['备注', '', blue, true]];
        document.getElementById('props').innerHTML = props.map(([name, value, color, check], i) => `
            <div class="h-[18.4px] flex border-b border-[#cfcfcf] leading-[18px]">
                <div class="w-[74px] pl-[17px] border-r border-[#cfcfcf] overflow-hidden whitespace-nowrap ${color}">${name}</div>
                <div class="w-[56px] pl-[2px] border-r border-[#cfcfcf] overflow-hidden text-[10.500px] font-['Liberation_Serif','Noto_Sans_CJK_SC',serif] ${i === 0 ? 'bg-[#dcecfb]' : ''} ${color === grey ? grey : ''}">${value}</div>
                <div class="w-[27px] flex items-center justify-center">${check ? '<span class="w-[11px] h-[11px] bg-[#e8e8e8] border border-[#aaa]"></span>' : ''}</div>
            </div>`).join('') + ['计算属性', '显示样式'].map(name => `
            <div class="h-[17px] flex border-b border-[#cfcfcf] leading-[16px]">
                <div class="w-[74px] flex items-center pl-[2px] border-r border-[#cfcfcf]"><span class="w-[10px] h-[10px] bg-[#e4e4e4] text-[12px] leading-[9px] text-center">+</span><span class="ml-[5px]">${name}</span></div>
                <div class="w-[56px] border-r border-[#cfcfcf]"></div>
                <div class="w-[27px]"></div>
            </div>`).join('');

        // side tools: [path, label, top gap class, separator above, has a dropdown arrow]
        const tools = [
            ['M1 12h11M3 9l7-7 2 2-7 7z', '', 'mt-0', false],
            ['M5 3.500a2.500 2.500 0 1 0 .1 0M9 7.500a2.500 2.500 0 1 0 .1 0M1 6l12 2', '', 'mt-[3px]', true],
            ['M6 1L1 12h5zM8 1l5 11H8z', '', 'mt-[5px]', false],
            ['M7 1v12M1 7h12M5 3l2-2 2 2M5 11l2 2 2-2M3 5L1 7l2 2M11 5l2 2-2 2', '', 'mt-[1px]', true],
            ['M10 4a4.500 4.500 0 1 1-3-1M7 1v4h3', '', 'mt-[1px]', false],
            ['M1 7h8M9 3v8M11 2v10', '延伸', 'mt-[5px]', true],
            ['M1 7h12M5 2v10M9 2v10', '修剪', 'mt-0', true],
            ['M1 4h5M8 4h5M1 9h12M4 3v2M10 3v2', '打断', 'mt-[6px]', true, true],
            ['M1 4h12M1 9h12M4 3v2M10 3v2', '合并', 'mt-[10px]', false],
            ['M1 12h12M3 10l8-7M4 6h7', '分割', 'mt-[5px]', false],
            ['M2 1v11h11M5 5h6M5 8h4', '对齐', 'mt-[5px]', true, true],
            ['M7 2c4 0 6 3 5 6-1 2-9 2-10 0C1 5 3 2 7 2z', '偏移', 'mt-[11px]', false]
        ];
        document.getElementById('vtools').innerHTML = tools.map(([d, label, gap, sep, more], i) => `
            ${sep ? '<span class="shrink-0 w-[20px] h-px bg-[#999] mt-[4px] mb-[1px]"></span>' : ''}
            <svg class="shrink-0 ${gap}" width="16" height="16" viewBox="0 0 14 14"><path d="${d}" fill="none" stroke="${i === 4 ? '#3f7fd8' : '#8f9bb0'}" stroke-width="${i === 4 ? 2 : 1}"/></svg>
            ${label ? `<span class="w-[11px] shrink-0 mt-[1px] text-center">${label}</span>` : ''}
            ${more ? '<svg class="shrink-0 mt-px -mb-[4px] text-[#888]" width="3" height="3" viewBox="0 0 5 3"><use href="#arrow"/></svg>' : ''}`).join('') + '<span class="mt-[8px] text-[#222] text-[11px] font-bold rotate-90">»</span>';

        document.getElementById('sheets').innerHTML = [1, 2, 3, 4, 5, 6, 7, 8, 9, 10].map(n => `
            <div class="h-[16.7px] flex leading-[16px] border-b border-[#ddd]">
                <div class="w-[19px] text-center ${n === 4 ? 'bg-[#fbcf8f] text-[#7a1f6e]' : 'bg-[#f2f2f2]'}">${n}</div>
                <div class="flex-1 ${n === 1 || n === 10 ? 'bg-[#f4f4f4]' : 'bg-[#ffff00]'} ${n === 4 ? 'border-2 border-black text-[10px] leading-[12px]' : ''}">${n === 4 ? '图' : ''}${n === 1 || n === 10 ? '<span class="inline-block w-[10px] h-[10px] bg-[#e4e4e4] border border-[#aaa] ml-[2px] align-middle"></span>' : ''}${n > 1 && n !== 4 && n !== 10 ? '<span class="block w-[9px] h-full border-r border-[#d8d820]"></span>' : ''}</div>
            </div>`).join('');
    </script>
</body>
</html>
